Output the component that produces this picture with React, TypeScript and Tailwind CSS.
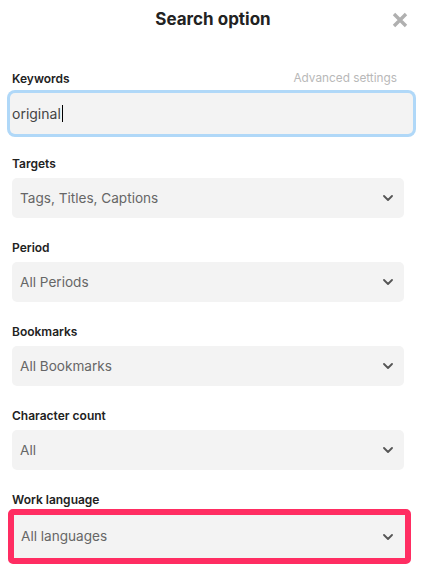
import React from "react";

const Chevron = () => (
  <svg width="10" height="6" viewBox="0 0 10 6" fill="none">
    <path d="M1 1l4 4 4-4" stroke="#555" strokeWidth="1.8" strokeLinecap="round" strokeLinejoin="round" />
  </svg>
);

function SelectField({ label, value }: { label: string; value: string }) {
  return (
    <div className="mt-[22px] flex flex-col">
      <div className="h-4 text-[12px] leading-4 font-semibold text-[#222]">{label}</div>
      <div className="mt-[6px] flex h-10 w-[392px] items-center justify-between rounded-[5px] bg-[#f3f3f3] pl-2 pr-[11px]">
        <span className="text-[13.6px] text-[#666]">{value}</span>
        <Chevron />
      </div>
    </div>
  );
}

export default function App() {
  return (
    <div className="h-[571px] w-[422px] overflow-hidden bg-white font-['Inter',sans-serif]">
      <div className="grid h-10 grid-cols-[1fr_auto_1fr] items-center">
        <div />
        <h1 className="pl-1 text-[17px] font-bold text-[#222]">Search option</h1>
        <div className="flex justify-end pr-[14px]">
          <svg width="16" height="16" viewBox="0 0 16 16" fill="none">
            <path d="M2 2l12 12M14 2L2 14" stroke="#b0b0b0" strokeWidth="3.4" />
          </svg>
        </div>
      </div>

      <div className="mt-[31px] flex flex-col px-3">
        <div className="flex h-4 items-center justify-between pr-[13px] text-[12px]">
          <span className="font-semibold text-[#222]">Keywords</span>
          <span className="text-[11.8px] text-[#b8b8b8]">Advanced settings</span>
        </div>
        <div className="mt-[6px] -ml-[2px] flex h-[41px] w-[403px] items-center rounded-[5px] bg-[#f3f3f3] pl-[2px] ring-[3px] ring-[#b0d8f8]">
          <span className="text-[14px] text-[#444]">original</span>
          <span className="ml-px h-[17px] w-px bg-black" />
        </div>

        <SelectField label="Targets" value="Tags, Titles, Captions" />
        <SelectField label="Period" value="All Periods" />
        <SelectField label="Bookmarks" value="All Bookmarks" />
        <SelectField label="Character count" value="All" />

        <div className="mt-[22px] flex flex-col">
          <div className="h-4 text-[12px] leading-4 font-semibold text-[#222]">Work language</div>
          <div className="mt-px -ml-1 w-[403px] rounded-[5px] border-[6px] border-[#ff2d62]">
            <div className="flex h-[43px] items-center justify-between bg-[#f3f3f3] pl-[7px] pr-[12px]">
              <span className="text-[13.6px] text-[#666]">All languages</span>
              <Chevron />
            </div>
          </div>
        </div>
      </div>
    </div>
  );
}
